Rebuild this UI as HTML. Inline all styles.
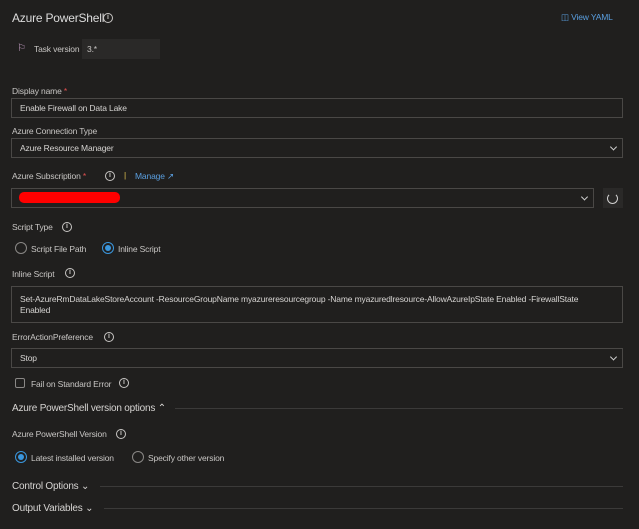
<!DOCTYPE html><html><head><style>
*{box-sizing:border-box;margin:0;padding:0}
body{width:639px;height:529px;background:#201f1e;color:#c8c6c4;font-family:"Liberation Sans",sans-serif;font-size:8.5px;letter-spacing:-0.15px;position:relative;overflow:hidden}
.a{position:absolute;white-space:nowrap}
.box{position:absolute;border:1px solid #4a4846;background:#201f1e;color:#d6d4d2;padding-left:8px;font-size:8.5px;display:flex;align-items:center}
.chev{position:absolute;right:6px;top:50%;width:5px;height:5px;border-right:1.2px solid #d0d0d0;border-bottom:1.2px solid #d0d0d0;transform:translateY(-70%) rotate(45deg)}
.info{position:absolute;width:10px;height:10px;border:1.2px solid #c8c6c4;border-radius:50%;font-size:7px;line-height:8px;text-align:center;font-weight:bold;letter-spacing:0}
.radio{position:absolute;width:12px;height:12px;border:1px solid #8a8886;border-radius:50%}
.radio.on{border-color:#3a96dd}
.radio.on:after{content:"";position:absolute;left:2px;top:2px;width:6px;height:6px;border-radius:50%;background:#3a96dd}
.line{position:absolute;height:1px;background:#3b3a39}
.h{font-size:10px;color:#d6d4d2;letter-spacing:-0.2px}
</style></head><body>
<div class="a" style="left:12px;top:11px;font-size:12px;letter-spacing:-0.2px;color:#dcdcdc">Azure PowerShell</div>
<div class="info" style="left:103px;top:13px">i</div>
<div class="a" style="left:561px;top:12px;color:#5a9fe0">&#9707; View YAML</div>
<div class="a" style="left:17px;top:43px;color:#c8a0c8;font-size:10px">⚐</div>
<div class="a" style="left:34px;top:44px">Task version</div>
<div class="a" style="left:82px;top:39px;width:78px;height:20px;background:#2a2928;padding:5px 0 0 5px">3.*</div>
<div class="a" style="left:12px;top:86px">Display name <span style="color:#e05050">*</span></div>
<div class="box" style="left:11px;top:98px;width:612px;height:20px">Enable Firewall on Data Lake</div>
<div class="a" style="left:12px;top:126px">Azure Connection Type</div>
<div class="box" style="left:11px;top:138px;width:612px;height:20px">Azure Resource Manager<span class="chev"></span></div>
<div class="a" style="left:12px;top:171px">Azure Subscription <span style="color:#e05050">*</span></div>
<div class="info" style="left:105px;top:171px">i</div>
<div class="a" style="left:124px;top:170px;color:#e0c050">|</div>
<div class="a" style="left:135px;top:171px;color:#5a9fe0">Manage ↗</div>
<div class="box" style="left:11px;top:188px;width:583px;height:20px"><span class="chev"></span></div>
<div class="a" style="left:19px;top:192px;width:101px;height:11px;background:#f00;border-radius:5px"></div>
<div class="a" style="left:603px;top:188px;width:20px;height:20px;background:#2a2928"></div>
<div class="a" style="left:607px;top:193px;width:11px;height:11px;border:1.3px solid #d0d0d0;border-radius:50%;border-top-color:transparent"></div>
<div class="a" style="left:12px;top:222px">Script Type</div>
<div class="info" style="left:62px;top:222px">i</div>
<div class="radio" style="left:15px;top:242px"></div>
<div class="a" style="left:31px;top:244px">Script File Path</div>
<div class="radio on" style="left:102px;top:242px"></div>
<div class="a" style="left:118px;top:244px">Inline Script</div>
<div class="a" style="left:12px;top:269px">Inline Script</div>
<div class="info" style="left:65px;top:268px">i</div>
<div class="box" style="left:11px;top:286px;width:612px;height:37px;display:block;padding:7px 20px 0 8px;white-space:normal;line-height:11px;letter-spacing:-0.15px">Set-AzureRmDataLakeStoreAccount -ResourceGroupName myazureresourcegroup -Name myazuredlresource-AllowAzureIpState Enabled -FirewallState Enabled</div>
<div class="a" style="left:12px;top:332px">ErrorActionPreference</div>
<div class="info" style="left:104px;top:332px">i</div>
<div class="box" style="left:11px;top:348px;width:612px;height:20px">Stop<span class="chev"></span></div>
<div class="a" style="left:15px;top:378px;width:10px;height:10px;border:1px solid #8a8886;border-radius:2px"></div>
<div class="a" style="left:31px;top:379px">Fail on Standard Error</div>
<div class="info" style="left:119px;top:378px">i</div>
<div class="a h" style="left:12px;top:403px">Azure PowerShell version options &#8963;</div>
<div class="line" style="left:175px;top:408px;width:448px"></div>
<div class="a" style="left:12px;top:429px">Azure PowerShell Version</div>
<div class="info" style="left:116px;top:429px">i</div>
<div class="radio on" style="left:15px;top:451px"></div>
<div class="a" style="left:31px;top:453px">Latest installed version</div>
<div class="radio" style="left:132px;top:451px"></div>
<div class="a" style="left:148px;top:453px">Specify other version</div>
<div class="a h" style="left:12px;top:481px">Control Options ⌄</div>
<div class="line" style="left:100px;top:486px;width:523px"></div>
<div class="a h" style="left:12px;top:503px">Output Variables ⌄</div>
<div class="line" style="left:104px;top:508px;width:519px"></div>
</body></html>
